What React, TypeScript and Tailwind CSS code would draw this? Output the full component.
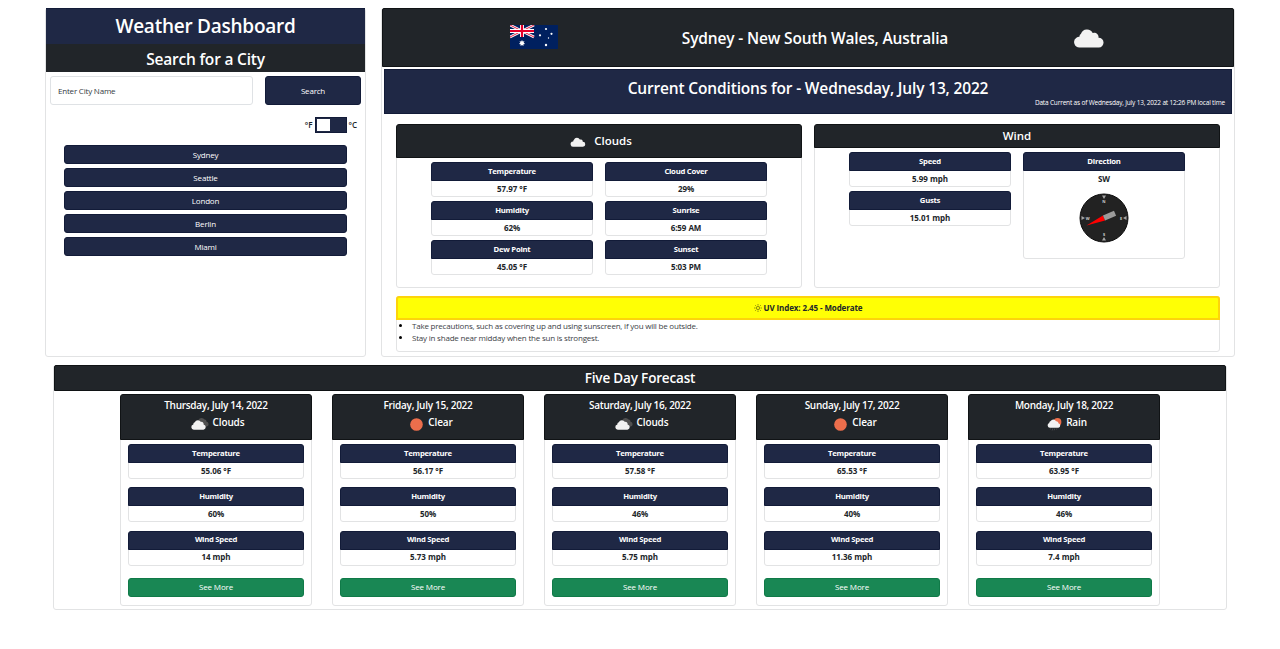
import { type ReactNode } from "react";
import { clsx } from "clsx";

const NAVY = "bg-[#1f2845]";
const NAVY_HEAD = "bg-[#1f2845] border border-[#121b38]";
const DARK_HEAD = "bg-[#212529] border border-[#101315]";
const CARD = "rounded-[3px] border border-[#e2e3e4] bg-white";

function Cloud({ className }: { className: string }) {
  return (
    <svg viewBox="0 0 30 20" className={className}>
      <path fill="#f2f2f2" d="M5.600 19.500a5.400 5.400 0 0 1-3.200-9.800 5 5 0 0 1 3-.9 3.900 3.900 0 0 1 1.600-3.100 6.300 6.300 0 0 1 11.700-.6 4.300 4.300 0 0 1 5.800 4.600 4.900 4.900 0 0 1 .3 9.800z" />
    </svg>
  );
}

function BrokenClouds() {
  return (
    <svg viewBox="0 0 18 12" className="ml-[3.500px] h-3 w-[18px]">
      <path fill="#505050" d="M7.500 1.800A3.600 3.600 0 0 1 13.600 1.600a2 2 0 0 1 1.900 2.200 2.400 2.400 0 0 1 .8 4.500L14 9z" />
      <path fill="#f2f2f2" d="M2.800 11.700a2.700 2.700 0 0 1-.5-5.300 2 2 0 0 1 1.500-2.100 3.500 3.500 0 0 1 6.200-.4 2.100 2.100 0 0 1 2.600 2.500 2.700 2.700 0 0 1-.1 5.300z" />
    </svg>
  );
}

function Sun() {
  return (
    <svg viewBox="0 0 14 14" className="ml-[6.500px] size-[13px]">
      <circle cx="7" cy="7" r="6.800" fill="#ec6e4c" />
    </svg>
  );
}

function RainIcon() {
  return (
    <svg viewBox="0 0 15 13" className="ml-[5.500px] h-[13px] w-[15px]">
      <circle cx="10.500" cy="4" r="3.900" fill="#ec6e4c" />
      <path fill="#f2f2f2" d="M2.900 9.800a2.500 2.500 0 0 1-.7-4.800 2 2 0 0 1 1.500-1.900 3 3 0 0 1 5.300.2 1.900 1.900 0 0 1 2.400 2 2.300 2.300 0 0 1 0 4.500z" />
      <path stroke="#505050" strokeWidth=".8" d="m3.700 10.300-.4 1.200m2.600-1.200-.7 2.200m2.700-2.200-.7 2m2.700-2-.4 1.200" />
    </svg>
  );
}

function Flag() {
  return (
    <svg viewBox="0 0 48 24" className="h-6 w-12">
      <path fill="#00205f" d="M0 0h48v24H0z" />
      <path stroke="#fff" strokeWidth="2.600" d="m0 0 24 12M24 0 0 12" />
      <path stroke="#e4002b" strokeWidth=".9" d="m0 0 24 12M24 0 0 12" />
      <path stroke="#fff" strokeWidth="4" d="M12 0v12M0 6h24" />
      <path stroke="#e4002b" strokeWidth="2.200" d="M12 0v12M0 6h24" />
      <g fill="#fff">
        <path d="m12 15 .8 1.600 1.700-.4-.8 1.600 1.400 1.100-1.700.4v1.800L12 20l-1.400 1.100v-1.800l-1.700-.4 1.400-1.100-.8-1.600 1.700.4z" />
        <circle cx="36" cy="4" r="1.100" />
        <circle cx="30" cy="10.300" r="1.100" />
        <circle cx="41.500" cy="8.800" r="1.100" />
        <circle cx="38.500" cy="13" r=".7" />
        <circle cx="36" cy="20" r="1.200" />
      </g>
    </svg>
  );
}

function Compass() {
  return (
    <svg viewBox="0 0 50 50" className="size-[50px]">
      <circle cx="25" cy="25" r="24" fill="#222" stroke="#0d0d0d" strokeWidth="1" />
      <path fill="#a5a5a5" d="M23 2.500h4L25 6zM23 47.500h4L25 44zM2.500 23v4L6 25zM47.500 23v4L44 25z" />
      <g fill="#d0d0d0" fontSize="4" fontWeight="700" textAnchor="middle">
        <text x="25" y="9.800">N</text>
        <text x="25" y="43.200">S</text>
        <text x="8.800" y="26.500">W</text>
        <text x="42" y="26.500">E</text>
      </g>
      <g transform="rotate(-23 25 25)">
        <path fill="#f00" d="M6 25l19-2.700v5.400z" />
        <path fill="#9b9b9b" d="M25 22.300h12v5.400H25z" />
      </g>
    </svg>
  );
}

function SunGlyph() {
  return (
    <svg viewBox="0 0 8 8" className="size-2" fill="none" stroke="#4a4a10" strokeWidth=".6">
      <circle cx="4" cy="4" r="1.600" />
      <path d="M4 0v1.500M4 6.500V8M0 4h1.500M6.500 4H8M1.200 1.200l1 1M5.800 5.800l1 1M6.800 1.200l-1 1M2.200 5.800l-1 1" />
    </svg>
  );
}

type StatProps = { label: string; value: string; children?: ReactNode; className?: string };

function Stat({ label, value, children, className }: StatProps) {
  return (
    <div className={clsx(CARD, "flex flex-col items-center text-[8px]", className)}>
      <div className={clsx(NAVY_HEAD, "-mx-px -mt-px flex h-[19px] shrink-0 items-center justify-center self-stretch rounded-t-[3px] text-[7.700px] font-bold tracking-[-0.250px] text-white")}>
        {label}
      </div>
      <div className="flex h-[15px] items-center font-bold tracking-[-0.060px]">{value}</div>
      {children}
    </div>
  );
}

const cities = ["Sydney", "Seattle", "London", "Berlin", "Miami"];

const days: { date: string; icon: ReactNode; sky: string; temp: string; humidity: string; wind: string }[] = [
  { date: "Thursday, July 14, 2022", icon: <BrokenClouds />, sky: "Clouds", temp: "55.06 °F", humidity: "60%", wind: "14 mph" },
  { date: "Friday, July 15, 2022", icon: <Sun />, sky: "Clear", temp: "56.17 °F", humidity: "50%", wind: "5.73 mph" },
  { date: "Saturday, July 16, 2022", icon: <BrokenClouds />, sky: "Clouds", temp: "57.58 °F", humidity: "46%", wind: "5.75 mph" },
  { date: "Sunday, July 17, 2022", icon: <Sun />, sky: "Clear", temp: "65.53 °F", humidity: "40%", wind: "11.36 mph" },
  { date: "Monday, July 18, 2022", icon: <RainIcon />, sky: "Rain", temp: "63.95 °F", humidity: "46%", wind: "7.4 mph" },
];

function SearchPanel() {
  return (
    <section className={clsx(CARD, "flex h-[349px] w-[321px] flex-col")}>
      <h1 className={clsx(NAVY, "-mt-px flex h-9 items-center justify-center border-t border-[#121b38] text-[19px] font-semibold tracking-[-0.250px] text-white")}>
        Weather Dashboard
      </h1>
      <h2 className="flex h-7 items-center justify-center bg-[#212529] pt-[3px] text-[15.500px] font-semibold tracking-[-0.200px] text-white">Search for a City</h2>
      <div className="mt-1 flex justify-between px-[4px]">
        <div className="flex h-[29px] w-[203px] items-center rounded-[3px] border border-[#dfe2e5] px-[7px] text-[8px] tracking-[-0.200px] text-[#33393f]">Enter City Name</div>
        <button className={clsx(NAVY_HEAD, "h-[29px] w-24 rounded-[3px] text-[8px] tracking-[-0.200px] text-white")}>Search</button>
      </div>
      <div className="mt-3 flex h-4 items-center justify-end gap-[2px] pr-[8px] text-[8px] font-semibold">
        <span>°F</span>
        <span className={clsx(NAVY, "flex h-4 w-8 border border-[#121b38] p-px")}><i className="w-[13px] bg-white" /></span>
        <span>°C</span>
      </div>
      <div className="mx-[18px] mt-3 flex flex-col gap-1">
        {cities.map((c) => (
          <button key={c} className={clsx(NAVY_HEAD, "h-[19px] rounded-[3px] text-[8px] tracking-[-0.180px] text-white")}>{c}</button>
        ))}
      </div>
    </section>
  );
}

function CurrentPanel() {
  return (
    <section className={clsx(CARD, "h-[349px] w-[854px]")}>
      <header className={clsx(DARK_HEAD, "-mt-px grid h-[59px] grid-cols-[302px_260px_288px] items-center rounded-t-[2px] text-white")}>
        <div className="flex justify-center pb-px"><Flag /></div>
        <h2 className="flex justify-center pt-[2px] text-[15.500px] font-semibold tracking-[-0.160px] whitespace-nowrap">Sydney - New South Wales, Australia</h2>
        <div className="flex justify-center"><Cloud className="h-5 w-[30px]" /></div>
      </header>
      <div className={clsx(NAVY, "mx-[2px] mt-[2px] flex h-[45px] flex-col border border-[#121b38] text-white")}>
        <h2 className="flex h-9 items-center justify-center pt-[2px] text-[15.500px] font-semibold tracking-[-0.160px]">Current Conditions for - Wednesday, July 13, 2022</h2>
        <p className="-mt-[7px] flex h-2 items-center justify-end pr-[6px] text-[6.500px] tracking-[-0.180px]">Data Current as of Wednesday, July 13, 2022 at 12:26 PM local time</p>
      </div>
      <div className="mx-[14px] mt-[10px] grid h-[164px] grid-cols-2 gap-3">
        <div className={CARD}>
          <h3 className={clsx(DARK_HEAD, "-mx-px -mt-px flex h-[34px] items-center justify-center rounded-t-[3px] text-[11.500px] font-semibold text-white")}>
            <span className="w-7 pt-[2px] pl-1"><Cloud className="h-[10px] w-4" /></span><span className="-mt-px">Clouds</span>
          </h3>
          <div className="mx-[34px] mt-1 grid grid-cols-2 gap-x-3 gap-y-1">
            <Stat label="Temperature" value="57.97 °F" />
            <Stat label="Cloud Cover" value="29%" />
            <Stat label="Humidity" value="62%" />
            <Stat label="Sunrise" value="6:59 AM" />
            <Stat label="Dew Point" value="45.05 °F" />
            <Stat label="Sunset" value="5:03 PM" />
          </div>
        </div>
        <div className={CARD}>
          <h3 className={clsx(DARK_HEAD, "-mx-px -mt-px flex h-6 items-center justify-center rounded-t-[3px] text-[11.500px] font-semibold text-white")}>Wind</h3>
          <div className="mx-[34px] mt-1 grid grid-cols-2 items-start gap-3">
            <div className="flex flex-col gap-1">
              <Stat label="Speed" value="5.99 mph" />
              <Stat label="Gusts" value="15.01 mph" />
            </div>
            <Stat label="Direction" value="SW" className="h-[107px]"><div className="mt-[7px]"><Compass /></div></Stat>
          </div>
        </div>
      </div>
      <div className={clsx(CARD, "mx-[14px] mt-2 h-14 text-[8px]")}>
        <div className="-mx-px -mt-px flex h-6 items-center justify-center gap-[2px] rounded-t-[3px] border-2 border-[#fdd40b] bg-[#ffff05] font-bold tracking-[-0.110px]">
          <SunGlyph />UV Index: 2.45 - Moderate
        </div>
        <ul className="list-disc pl-[15px] leading-[12px] tracking-[-0.210px] text-[#3c4146] marker:text-black">
          <li>Take precautions, such as covering up and using sunscreen, if you will be outside.</li>
          <li>Stay in shade near midday when the sun is strongest.</li>
        </ul>
      </div>
    </section>
  );
}

function Forecast() {
  return (
    <section className={clsx(CARD, "mt-2 ml-2 h-[245px] w-[1174px]")}>
      <h2 className={clsx(DARK_HEAD, "-mt-px flex h-[26px] items-center justify-center rounded-t-[2px] pt-px text-[13.500px] font-semibold tracking-[-0.170px] text-white")}>Five Day Forecast</h2>
      <div className="mt-[3px] flex justify-center gap-5">
        {days.map((d) => (
          <article key={d.date} className={clsx(CARD, "h-[212px] w-48")}>
            <header className={clsx(DARK_HEAD, "-mx-px -mt-px flex h-[46px] flex-col items-center rounded-t-[3px] pt-[2px] text-[10px] font-semibold text-white")}>
              <div className="flex h-[17px] items-center tracking-[-0.280px]">{d.date}</div>
              <div className="flex h-[18px] items-center tracking-[-0.150px]"><span className="w-[25px] pt-[2px]">{d.icon}</span><span className="-mt-px">{d.sky}</span></div>
            </header>
            <div className="mx-[7px] mt-1 flex flex-col gap-[8.300px]">
              <Stat label="Temperature" value={d.temp} />
              <Stat label="Humidity" value={d.humidity} />
              <Stat label="Wind Speed" value={d.wind} />
              <button className="mt-1 h-[19px] rounded-[3px] border border-[#107a48] bg-[#198754] text-[8px] tracking-[-0.150px] text-white">See More</button>
            </div>
          </article>
        ))}
      </div>
    </section>
  );
}

export default function App() {
  return (
    <main className="h-[649px] overflow-hidden bg-white pt-2 pl-[45px] font-['Open_Sans','Noto_Sans',sans-serif] text-[#212529]">
      <div className="flex gap-[15px]"><SearchPanel /><CurrentPanel /></div>
      <Forecast />
    </main>
  );
}
